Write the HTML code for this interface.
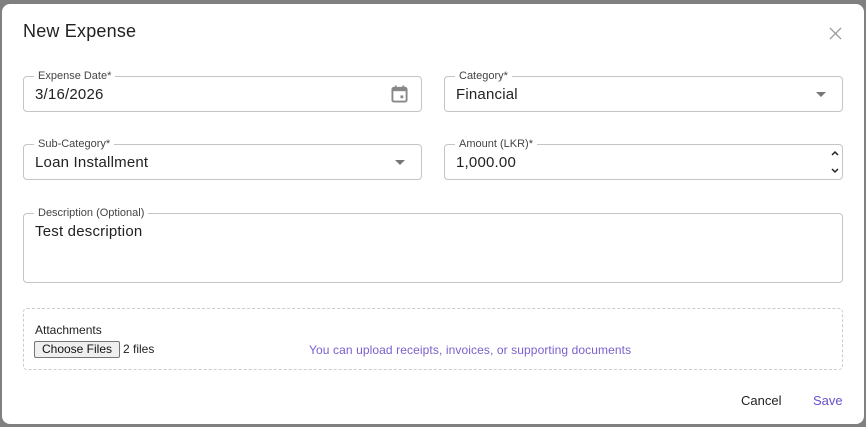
<!DOCTYPE html>
<html><head><style>
body{margin:0;width:866px;height:427px;background:#808080;font-family:"Liberation Sans",sans-serif;position:relative;overflow:hidden}
.dlg{position:absolute;left:2px;top:4px;width:862px;height:420px;background:#fff;border-radius:8px}
.t{position:absolute;left:21px;top:17px;font-size:18px;color:#222;letter-spacing:0.2px}
.x{position:absolute;left:827px;top:23px}
.f{position:absolute;border:1px solid #c4c4c4;border-radius:4px;box-sizing:border-box}
.lb{position:absolute;top:-8px;left:10px;padding:0 4px;background:#fff;font-size:11px;color:#444;line-height:14px}
.v{position:absolute;left:11px;top:9px;font-size:15px;color:#222;letter-spacing:0.2px}
.arr{position:absolute;right:16px;top:15px;width:0;height:0;border-left:5px solid transparent;border-right:5px solid transparent;border-top:5px solid #777}
.att{position:absolute;left:21px;top:304px;width:820px;height:62px;border:1px dashed #ccc;border-radius:4px;box-sizing:border-box}
.btn{position:absolute;font-size:13px}
</style></head><body>
<div class="dlg">
<div class="t">New Expense</div>
<svg class="x" width="13" height="13" viewBox="0 0 14 14"><path d="M1 1L13 13M13 1L1 13" stroke="#999" stroke-width="1.4"/></svg>
<div class="f" style="left:21px;top:72px;width:399px;height:36px"><span class="lb">Expense Date*</span><span class="v">3/16/2026</span>
<svg style="position:absolute;right:13px;top:8px" width="17" height="18" viewBox="0 0 18 19"><rect x="1.5" y="3" width="15" height="14.5" rx="1.5" fill="none" stroke="#888" stroke-width="2"/><rect x="1.5" y="3" width="15" height="3.5" fill="#888"/><rect x="4" y="0.5" width="2" height="4" fill="#888"/><rect x="12" y="0.5" width="2" height="4" fill="#888"/><rect x="10" y="11" width="3" height="3" fill="#888"/></svg></div>
<div class="f" style="left:442px;top:72px;width:399px;height:36px"><span class="lb">Category*</span><span class="v">Financial</span><span class="arr"></span></div>
<div class="f" style="left:21px;top:140px;width:399px;height:36px"><span class="lb">Sub-Category*</span><span class="v">Loan Installment</span><span class="arr"></span></div>
<div class="f" style="left:442px;top:140px;width:399px;height:36px"><span class="lb">Amount (LKR)*</span><span class="v">1,000.00</span>
<svg style="position:absolute;right:2px;top:3px" width="10" height="28" viewBox="0 0 10 28"><path d="M2 7L5 4L8 7M2 21L5 24L8 21" fill="none" stroke="#222" stroke-width="1.5"/></svg></div>
<div class="f" style="left:21px;top:209px;width:820px;height:70px"><span class="lb">Description (Optional)</span><span class="v">Test description</span></div>
<div class="att">
<div style="position:absolute;left:11px;top:14px;font-size:12px;color:#222">Attachments</div>
<div style="position:absolute;left:10px;top:32px;width:84px;height:15px;background:#efefef;border:1px solid #767676;border-radius:2px;font-size:12px;line-height:15px;text-align:center;color:#111">Choose Files</div>
<div style="position:absolute;left:99px;top:32px;font-size:12px;color:#222;line-height:17px">2 files</div>
<div style="position:absolute;left:285px;top:34px;font-size:12px;color:#7a5fcf;letter-spacing:0.1px">You can upload receipts, invoices, or supporting documents</div>
</div>
<div class="btn" style="left:739px;top:389px;color:#222">Cancel</div>
<div class="btn" style="left:811px;top:389px;color:#6a4fd0">Save</div>
</div>
</body></html>
